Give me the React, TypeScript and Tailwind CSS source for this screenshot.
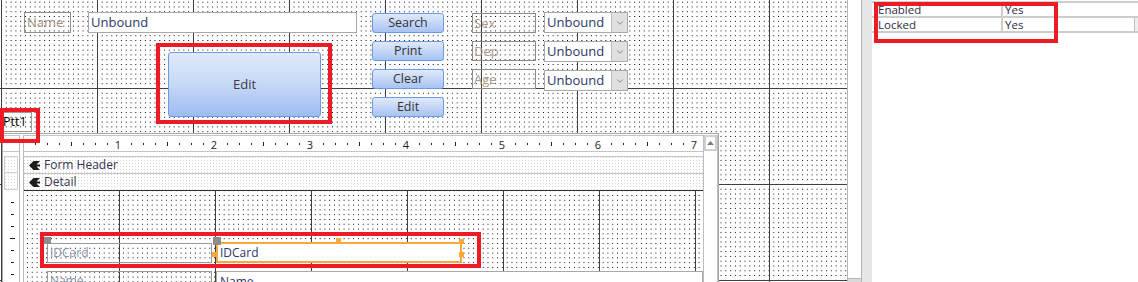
import { ChevronDown } from "lucide-react";

// form design surface: major lines every inch (96px), fine dots in between
const formGrid =
  "[background-image:linear-gradient(to_right,#404040_1px,transparent_1px),linear-gradient(to_bottom,#404040_1px,transparent_1px),conic-gradient(from_270deg_at_1px_1px,#000_90deg,transparent_0)] " +
  "[background-size:96px_96px,96px_96px,4.8px_4.8px] [background-position:1px_88px,1px_88px,1px_88px]";

const detailGrid =
  "[background-image:linear-gradient(to_right,#404040_1px,transparent_1px),linear-gradient(to_bottom,#303030_1px,transparent_1px),conic-gradient(from_270deg_at_1px_1px,#000_90deg,transparent_0)] " +
  "[background-size:96px_96px,96px_96px,4.8px_4.8px] [background-position:95px_0,0_0,3px_5px]";

const bandDots =
  "[background-image:conic-gradient(from_270deg_at_1px_1px,#d6d6d6_90deg,transparent_0)] [background-size:3px_3px]";

const buttons = [
  { label: "Search", cls: "top-[13px]" },
  { label: "Print", cls: "top-[41px]" },
  { label: "Clear", cls: "top-[69px]" },
  { label: "Edit", cls: "top-[97px]" },
];

const combos = [
  { label: "Sex", lab: "top-[13px]", box: "top-[12px]" },
  { label: "Dep", lab: "top-[41px]", box: "top-[41px]" },
  { label: "Age", lab: "top-[69px]", box: "top-[70px]" },
];

const rulerMarks = Array.from({ length: 56 }, (_, i) => i + 1);
const sideMarks = [1, 2, 3, 4, 5, 6, 7];

function SectionIcon() {
  return (
    <svg width="11" height="9" viewBox="0 0 11 9" className="shrink-0">
      <path d="M0 4.5 L4.5 0 L11 0 L7.5 3.5 L11 3.5 L11 5.5 L7.5 5.5 L11 9 L4.5 9 Z" fill="#1c1c1c" />
    </svg>
  );
}

function Subform() {
  return (
    <div className="absolute left-[2px] top-[133px] flex h-[160px] w-[717px] border border-[#a9a9a9] bg-white pt-[1px]">
      {/* left selector / vertical ruler */}
      <div className="flex w-[17px] shrink-0 flex-col border-r border-[#b9b9b9]">
        <div className="h-[17px] border-y border-[#c4c4c4]" />
        <div className="h-[4px]" />
        <div className={"mx-[1px] h-[17px] border border-[#d0d0d0] " + bandDots} />
        <div className={"mx-[1px] h-[17px] border-x border-b border-[#d0d0d0] " + bandDots} />
        <div className="relative flex-1">
          {sideMarks.map((j) =>
            j === 4 ? (
              <span key={j} className="absolute left-[7px] h-[1px] w-[5px] bg-[#1e1e1e]" style={{ top: j * 12 }} />
            ) : (
              <span key={j} className="absolute left-[8px] h-[1px] w-[3px] bg-[#1e1e1e]" style={{ top: j * 12 }} />
            )
          )}
        </div>
      </div>
      <div className="w-[3px] shrink-0" />

      {/* design area */}
      <div className="flex w-[680px] shrink-0 flex-col border-l border-[#b9b9b9]">
        <div className="relative h-[17px] border-y border-[#c4c4c4] text-[11px] leading-none text-[#1e1e1e]">
          {rulerMarks.map((i) =>
            i % 8 === 0 ? (
              <span key={i} className="absolute top-[3px] w-[10px] -translate-x-1/2 text-center" style={{ left: i * 12 - 2 }}>
                {i / 8}
              </span>
            ) : i % 4 === 0 ? (
              <span key={i} className="absolute top-[6px] h-[4px] w-[1px] bg-[#222]" style={{ left: i * 12 - 1 }} />
            ) : (
              <span key={i} className="absolute top-[7px] h-[2px] w-[1px] bg-[#222]" style={{ left: i * 12 - 1 }} />
            )
          )}
        </div>
        <div className="h-[4px]" />
        <div className={"flex h-[17px] items-center gap-[4px] border-t border-[#c4c4c4] pl-[5px] text-[12px] text-[#34344e] " + bandDots}>
          <SectionIcon />
          <span>Form Header</span>
        </div>
        <div className={"flex h-[17px] items-center gap-[4px] border-t border-[#c4c4c4] pl-[5px] text-[12px] text-[#34344e] " + bandDots}>
          <SectionIcon />
          <span>Detail</span>
        </div>

        <div className={"relative flex-1 bg-white " + detailGrid}>
          {/* IDCard row */}
          <div className="absolute left-[23px] top-[53px] h-[20px] w-[165px] border border-[#9a9a9a] pl-[2px] text-[12px] leading-[18px] text-[#8a91aa]">
            IDCard
          </div>
          <div className="absolute left-[20px] top-[47px] h-[7px] w-[7px] bg-[#8c8c8c]" />
          <div className="absolute left-[192px] top-[52px] h-[21px] w-[246px] border-2 border-[#f8a83c] bg-white pl-[2px] text-[12px] leading-[17px] text-[#2c3866]">
            IDCard
          </div>
          <div className="absolute left-[189px] top-[47px] h-[8px] w-[8px] bg-[#8c8c8c]" />
          <div className="absolute left-[312px] top-[48px] h-[5px] w-[5px] bg-[#f8a83c]" />
          <div className="absolute left-[435px] top-[49px] h-[5px] w-[5px] bg-[#f8a83c]" />
          <div className="absolute left-[435px] top-[62px] h-[5px] w-[5px] bg-[#f8a83c]" />
          <div className="absolute left-[188px] top-[62px] h-[5px] w-[5px] bg-[#f8a83c]" />

          {/* Name row */}
          <div className="absolute left-[23px] top-[81px] h-[20px] w-[165px] border border-[#9a9a9a] pl-[2px] text-[12px] leading-[18px] text-[#8a91aa]">
            Name
          </div>
          <div className="absolute left-[192px] top-[81px] h-[21px] w-[487px] border border-[#a9a9a9] bg-white pl-[3px] text-[12px] leading-[19px] text-[#2c3866]">
            Name
          </div>
        </div>
      </div>

      {/* scrollbar */}
      <div className="flex w-[15px] shrink-0 flex-col border-x border-[#bdbdbd] bg-white">
        <div className="flex h-[16px] items-center justify-center border-2 border-[#cfcfcf]">
          <svg width="7" height="4" viewBox="0 0 7 4">
            <path d="M0 4 L3.5 0 L7 4 Z" fill="#7a7a7a" />
          </svg>
        </div>
      </div>
    </div>
  );
}

export default function App() {
  return (
    <div className="relative flex h-[282px] w-[1138px] overflow-hidden bg-white font-['Open_Sans',sans-serif]">
      {/* main form design surface */}
      <div className={"relative h-full w-[847px] shrink-0 bg-white " + formGrid}>
        <div className="absolute left-[24px] top-[12px] h-[21px] w-[47px] border border-[#8f8f8f] pl-[2px] text-[13px] leading-[19px] text-[#a08d7e]">
          Name
        </div>
        <div className="absolute left-[88px] top-[12px] h-[21px] w-[269px] border border-[#a9a9a9] bg-white pl-[2px] text-[13px] leading-[19px] text-[#2c3866]">
          Unbound
        </div>

        <div className="absolute left-[168px] top-[52px] flex h-[65px] w-[153px] items-center justify-center rounded-[3px] border border-[#6b9be2] bg-gradient-to-b from-[#e1eafb] via-[#c6d8f7] to-[#9dbcf1] text-[13px] text-[#3c3c3c]">
          Edit
        </div>

        {buttons.map((b) => (
          <div
            key={b.label}
            className={
              "absolute left-[372px] flex h-[20px] w-[72px] items-center justify-center rounded-[3px] border border-[#6b9be2] bg-gradient-to-b from-[#e0e9fb] to-[#a8c3f3] text-[12.5px] text-[#333] " +
              b.cls
            }
          >
            {b.label}
          </div>
        ))}

        {combos.map((c) => (
          <div key={c.label}>
            <div className={"absolute left-[472px] h-[20px] w-[64px] border border-[#8c8c8c] pl-[1px] text-[13px] leading-[18px] text-[#ab9a8c] " + c.lab}>
              {c.label}
            </div>
            <div className={"absolute left-[544px] flex h-[21px] w-[84px] border border-[#a9a9a9] bg-white " + c.box}>
              <span className="flex-1 pl-[2px] text-[13px] leading-[19px] text-[#2c3866]">Unbound</span>
              <span className="flex w-[16px] items-center justify-center border-l border-[#bdbdbd] bg-[#e0e0e0]">
                <ChevronDown size={10} strokeWidth={1.5} color="#555" />
              </span>
            </div>
          </div>
        ))}

        <div className="absolute left-[-2px] top-[112px] h-[20px] w-[34px] border border-[#9b9b9b] pl-[4px] text-[12.5px] leading-[18px] text-black">
          Ptt1
        </div>

        <Subform />
      </div>

      {/* canvas scrollbar */}
      <div className="relative h-full w-[15px] shrink-0 border-x border-[#b5b5b5] bg-white">
        <div className="absolute bottom-0 left-0 right-0 h-[4px] border-t border-[#b5b5b5] bg-[#d9d9d9]" />
      </div>
      <div className="h-full w-[10px] shrink-0 bg-[#e6e6e6]" />

      {/* property sheet */}
      <div className="flex-1 pt-[1px] text-[11.5px] text-[#2d2d45]">
        <div className="border-t-2 border-[#cdcdcd]">
          <div className="flex h-[15px] border-b-2 border-[#cdcdcd] leading-[13px]">
            <span className="w-[131px] border-r-2 border-[#cdcdcd] pl-[6px]">Enabled</span>
            <span className="pl-[2px]">Yes</span>
          </div>
          <div className="flex h-[15px] border-b-2 border-[#cdcdcd] leading-[13px]">
            <span className="w-[131px] border-r-2 border-[#cdcdcd] pl-[6px]">Locked</span>
            <span className="flex-1 pl-[2px]">Yes</span>
            <span className="w-[4px] border-l border-[#bdbdbd] bg-[#efefef]" />
          </div>
        </div>
      </div>

      {/* red highlight marks */}
      <div className="absolute left-[156px] top-[43px] h-[81px] w-[176px] border-4 border-[#ed1c24]" />
      <div className="absolute left-0 top-[108px] h-[35px] w-[40px] border-4 border-[#ed1c24]" />
      <div className="absolute left-[40px] top-[232px] h-[36px] w-[441px] border-4 border-[#ed1c24]" />
      <div className="absolute left-[874px] top-[2px] h-[41px] w-[184px] border-4 border-[#ed1c24]" />
    </div>
  );
}
